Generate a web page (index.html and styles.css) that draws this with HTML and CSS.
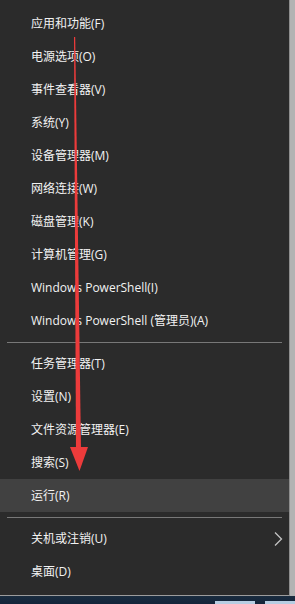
FILE: index.html
```html
<!DOCTYPE html>
<html lang="zh-CN">
<head>
<meta charset="utf-8">
<title>Win+X</title>
<link rel="stylesheet" href="styles.css">
</head>
<body>
<div class="screen">
  <div class="top">
    <div class="menu">
      <div class="item">应用和功能(F)</div>
      <div class="item">电源选项(O)</div>
      <div class="item">事件查看器(V)</div>
      <div class="item">系统(Y)</div>
      <div class="item">设备管理器(M)</div>
      <div class="item">网络连接(W)</div>
      <div class="item">磁盘管理(K)</div>
      <div class="item">计算机管理(G)</div>
      <div class="item">Windows PowerShell(I)</div>
      <div class="item">Windows PowerShell (管理员)(A)</div>
      <div class="sep"></div>
      <div class="item">任务管理器(T)</div>
      <div class="item">设置(N)</div>
      <div class="item">文件资源管理器(E)</div>
      <div class="item">搜索(S)</div>
      <div class="item active">运行(R)</div>
      <div class="sep"></div>
      <div class="item sub">关机或注销(U)
        <svg class="chev" width="10" height="16" viewBox="0 0 10 16"><polyline points="2,1.5 8.5,8 2,14.5" fill="none" stroke="#c4c4c4" stroke-width="1.3"/></svg>
      </div>
      <div class="item">桌面(D)</div>
      <svg class="arrow" width="290" height="596" viewBox="0 0 290 596">
        <polygon points="74,37 75.2,37 81,450 76,450" fill="#ec3b3b"/>
        <polygon points="70,447 88,447 79.5,471" fill="#ec3b3b"/>
      </svg>
    </div>
    <div class="edge"></div>
  </div>
  <div class="taskbar">
    <div class="tb-space"></div>
    <div class="tb-box b1"></div>
    <div class="tb-box b2"></div>
  </div>
</div>
</body>
</html>
```
FILE: styles.css
```css
html, body {
  margin: 0;
  padding: 0;
}
body {
  width: 295px;
  height: 604px;
  overflow: hidden;
  background: #17283a;
  font-family: "Open Sans", "Noto Sans CJK SC", sans-serif;
}
.screen {
  display: flex;
  flex-direction: column;
  width: 295px;
  height: 604px;
}
.top {
  display: flex;
  height: 596px;
}
.menu {
  position: relative;
  width: 289px;
  height: 588px;
  padding: 7px 0 0 0;
  background: #2b2b2b;
  border-right: 1px solid #8e8e8e;
  border-bottom: 1px solid #9c9c9c;
  box-sizing: content-box;
  display: flex;
  flex-direction: column;
}
.edge {
  flex: 1;
  background: #b3b3b3;
}
.item {
  height: 33px;
  line-height: 33px;
  padding-left: 31px;
  color: #f2f2f2;
  font-size: 12px;
  white-space: nowrap;
  display: flex;
  align-items: center;
}
.item.active {
  background: #414141;
}
.item.sub {
  position: relative;
}
.chev {
  position: absolute;
  left: 273px;
  top: 9px;
}
.sep {
  height: 1px;
  margin: 5px 7px 4px 7px;
  background: #787878;
}
.arrow {
  position: absolute;
  left: 0;
  top: 0;
  pointer-events: none;
}
.taskbar {
  flex: 1;
  display: flex;
  align-items: flex-end;
  background: linear-gradient(#1a2c3f, #13243a);
}
.tb-space {
  width: 215px;
}
.tb-box {
  height: 3px;
  background: #b7cde2;
}
.b1 {
  width: 40px;
}
.b2 {
  width: 30px;
  margin-left: 10px;
}
```
